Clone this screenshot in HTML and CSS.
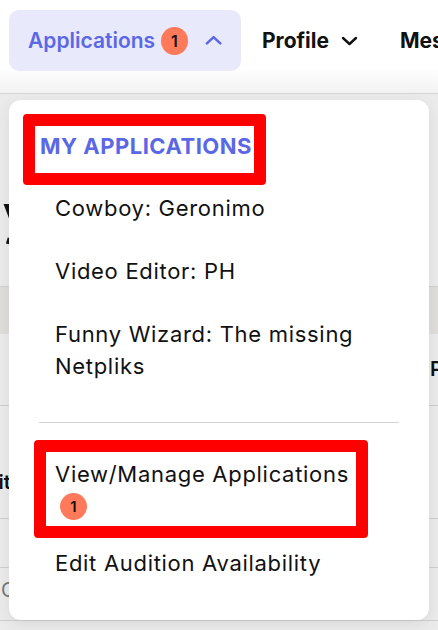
FILE: index.html
```html
<!DOCTYPE html>
<html lang="en">
<head>
    <meta charset="UTF-8">
    <meta name="viewport" content="width=device-width, initial-scale=1.0">
    <title>Applications menu</title>
    <link rel="stylesheet" href="styles.css">
</head>
<body>
    <header class="top-nav">
        <button type="button" class="nav-item nav-item-active">
            <span>Applications</span>
            <span class="count-badge">1</span>
            <svg class="chevron" width="18" height="10" viewBox="0 0 18 10"><path d="M2 8.5 9 2l7 6.5" fill="none" stroke="currentColor" stroke-width="2.6" stroke-linecap="round" stroke-linejoin="round"/></svg>
        </button>
        <button type="button" class="nav-item">
            <span>Profile</span>
            <svg class="chevron" width="17" height="10" viewBox="0 0 17 10"><path d="M2 2l6.5 6 6.5-6" fill="none" stroke="currentColor" stroke-width="2.4" stroke-linecap="round" stroke-linejoin="round"/></svg>
        </button>
        <button type="button" class="nav-item">
            <span>Messages</span>
        </button>
    </header>

    <main class="page">
        <h1 class="page-title">My</h1>
        <div class="table">
            <div class="table-head"></div>
            <div class="table-row row-one"><span class="cell-right">Pending</span></div>
            <div class="table-row row-two"><span class="cell-left">Edit</span></div>
            <div class="table-row row-three"></div>
            <div class="table-row row-four"><span class="cell-muted">Close</span></div>
        </div>
    </main>

    <!-- dropdown opened from the Applications tab -->
    <div class="dropdown">
        <div class="dropdown-heading">MY APPLICATIONS</div>
        <ul class="dropdown-list">
            <li><a href="#">Cowboy: Geronimo</a></li>
            <li><a href="#">Video Editor: PH</a></li>
            <li><a href="#">Funny Wizard: The missing Netpliks</a></li>
        </ul>
        <hr class="dropdown-divider">
        <a href="#" class="dropdown-manage">
            <span>View/Manage Applications</span>
            <span class="count-badge count-badge-small">1</span>
        </a>
        <a href="#" class="dropdown-link">Edit Audition Availability</a>
    </div>
</body>
</html>
```

FILE: styles.css
```css
* {
    margin: 0;
    padding: 0;
    box-sizing: border-box;
}

body {
    font-family: Inter, 'Noto Sans', sans-serif;
    background: #ebebeb;
    color: #111;
    width: 438px;
    height: 630px;
    overflow: hidden;
    position: relative;
}

.top-nav {
    height: 94px;
    background: linear-gradient(180deg, #fff 0%, #fff 72%, #f2f2f2 100%);
    border-bottom: 1px solid #d6d6d6;
    display: flex;
    align-items: flex-start;
    padding: 10px 0 0 9px;
    white-space: nowrap;
    overflow: hidden;
}

.nav-item {
    display: flex;
    align-items: center;
    height: 61px;
    border: none;
    background: none;
    font-family: inherit;
    font-size: 21px;
    font-weight: 700;
    color: #111;
    padding: 0 21px;
    flex-shrink: 0;
}

.nav-item .chevron {
    margin-left: 12px;
}

.nav-item-active {
    width: 232px;
    background: #e8e9fb;
    border-radius: 10px;
    color: #5b68e6;
    font-weight: 600;
    padding: 0 19px;
}

.nav-item-active .chevron {
    margin-left: 17px;
    margin-top: -2px;
}

.count-badge {
    display: inline-flex;
    align-items: center;
    justify-content: center;
    width: 28px;
    height: 28px;
    border-radius: 50%;
    background: #ff7a5a;
    color: #111;
    font-size: 16px;
    font-weight: 600;
    margin-left: 6px;
    letter-spacing: 0;
}

.page {
    padding-top: 96px;
}

.page-title {
    font-size: 54px;
    font-weight: 700;
    line-height: 48px;
    margin-left: -48px;
    height: 96px;
}

.table-head {
    height: 48px;
    background: #dfdeda;
    border-top: 1px solid #d2d2d2;
}

.table-row {
    border-bottom: 1px solid #cfcfcf;
    font-size: 20px;
    font-weight: 600;
    white-space: nowrap;
    overflow: hidden;
}

.row-one {
    height: 72px;
    padding: 23px 0 0 430px;
}

.row-two {
    height: 113px;
    padding-top: 64px;
}

.row-three {
    height: 49px;
}

.row-four {
    height: 53px;
    padding-top: 10px;
}

.cell-left {
    display: block;
    margin-left: -26px;
}

.cell-muted {
    display: block;
    margin-left: 1px;
    color: #777;
    font-weight: 400;
}

.dropdown {
    position: absolute;
    top: 100px;
    left: 9px;
    width: 420px;
    height: 520px;
    background: #fff;
    border-radius: 12px;
    box-shadow: 0 4px 16px rgba(0, 0, 0, 0.08);
    padding: 14px 14px 0;
    display: flex;
    flex-direction: column;
    align-items: flex-start;
}

/* red highlight boxes come from the annotated screenshot */
.dropdown-heading {
    border: 12px solid #ff0000;
    border-radius: 4px;
    width: 243px;
    padding: 4px 0 11px 5px;
    font-size: 22px;
    font-weight: 700;
    line-height: 32px;
    letter-spacing: 0.5px;
    color: #5b68e6;
    white-space: nowrap;
}

.dropdown-list {
    list-style: none;
    margin-top: 7px;
    display: flex;
    flex-direction: column;
    gap: 31px;
    padding-left: 32px;
    padding-right: 30px;
}

.dropdown-list a,
.dropdown-manage,
.dropdown-link {
    font-size: 22px;
    line-height: 32px;
    letter-spacing: 0.7px;
    color: #111;
    text-decoration: none;
}

.dropdown-divider {
    border: none;
    border-top: 1px solid #d4d4d4;
    width: 360px;
    margin: 40px 0 0 16px;
}

.dropdown-manage {
    margin: 17px 0 0 11px;
    width: 334px;
    border: 12px solid #ff0000;
    border-radius: 4px;
    padding: 6px 9px;
    display: flex;
    flex-direction: column;
    align-items: flex-start;
    white-space: nowrap;
}

.count-badge-small {
    width: 27px;
    height: 27px;
    font-size: 15px;
    margin: 3px 0 0 5px;
}

.dropdown-link {
    margin: 9px 0 0 32px;
}
```
